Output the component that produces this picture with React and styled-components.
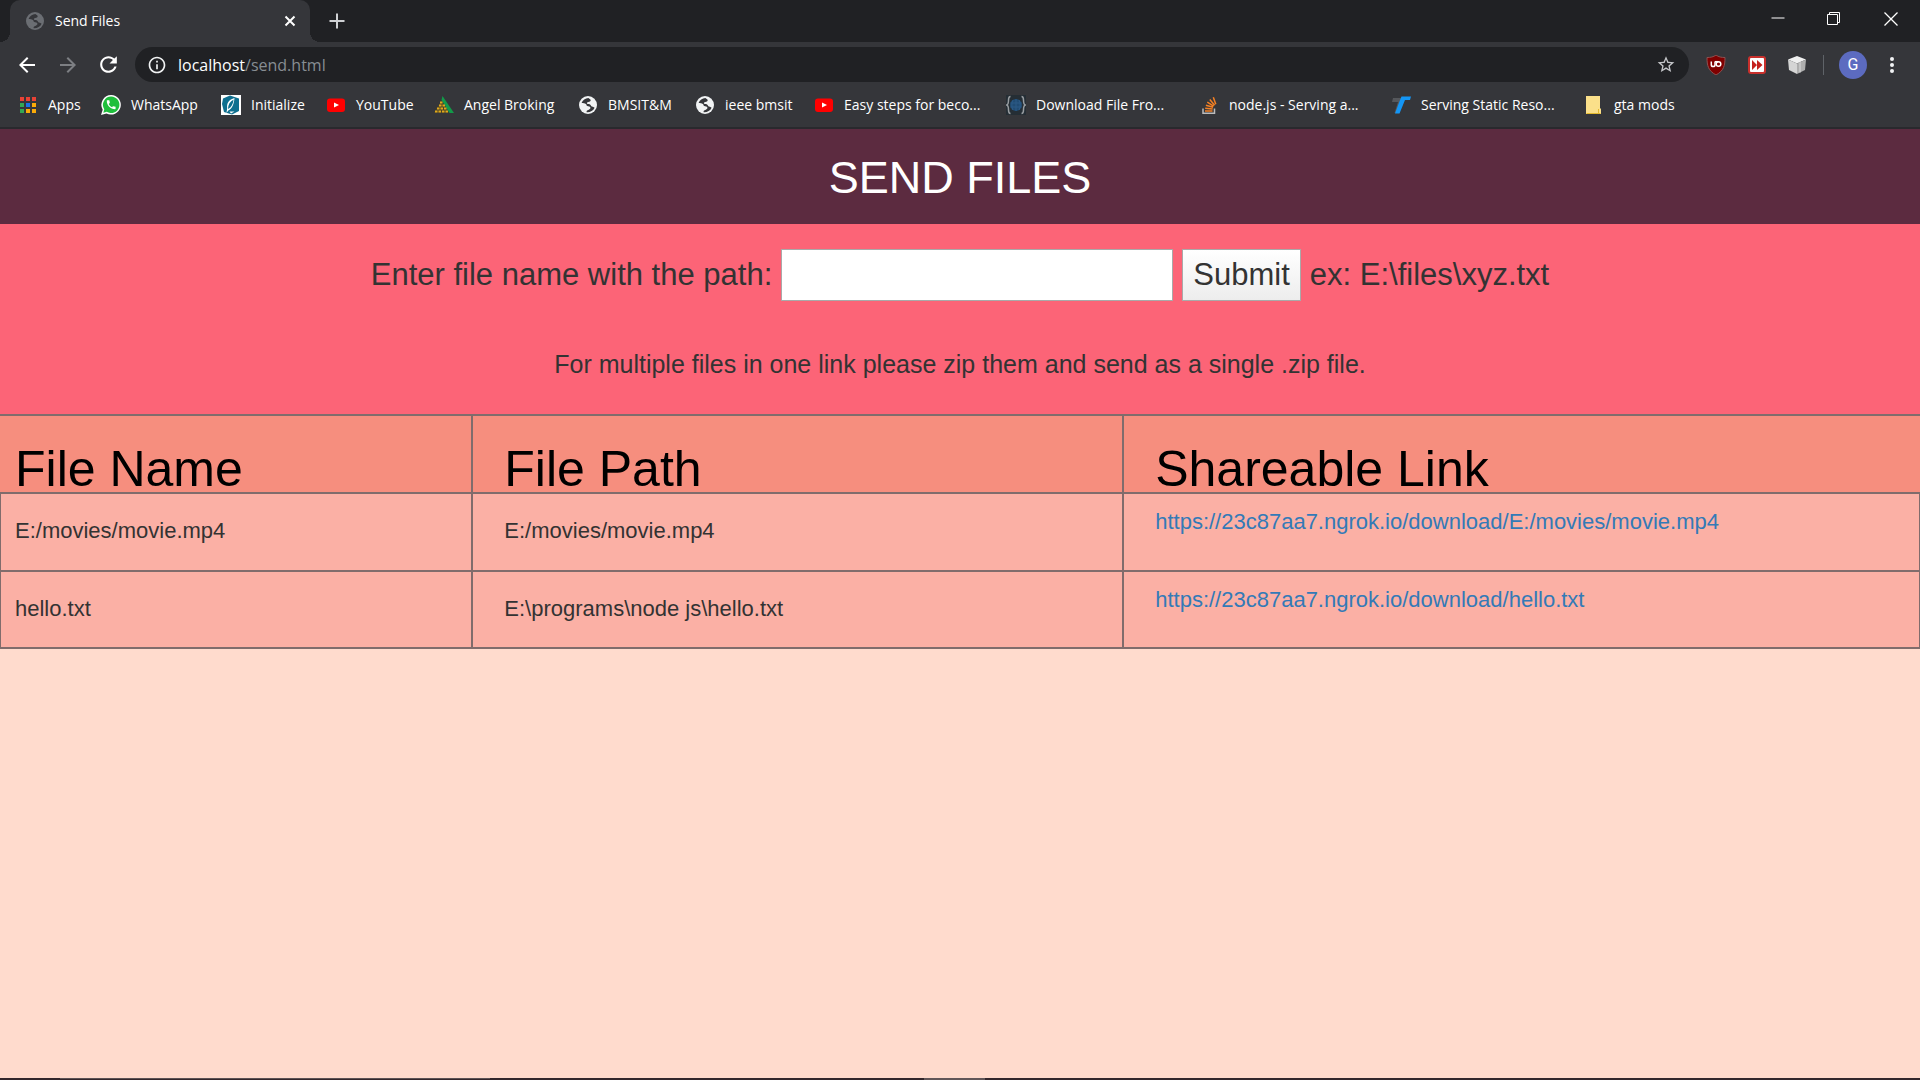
import React from "react";
import styled, { createGlobalStyle } from "styled-components";

const GlobalStyle = createGlobalStyle`
  *, *::before, *::after { box-sizing: border-box; }
  body {
    margin: 0;
    background: #ffdbcd;
    color: #333;
    font-family: Arial, "Liberation Sans", sans-serif;
  }
  button, input { font: inherit; color: inherit; margin: 0; }
`;

const Screen = styled.div`
  display: flex;
  flex-direction: column;
  min-height: 100vh;
  overflow-x: hidden;
`;

/* Browser frame */

const Chrome = styled.header`
  background: #35363a;
  color: #fff;
  font-family: "Segoe UI", "Open Sans", sans-serif;
  font-size: 14px;
  border-bottom: 2px solid #29292d;
`;

const TabStrip = styled.div`
  display: flex;
  justify-content: space-between;
  height: 42px;
  padding-left: 10px;
  background: #202124;
`;

const Tabs = styled.div`
  display: flex;
`;

const Tab = styled.div`
  position: relative;
  display: flex;
  align-items: center;
  gap: 10px;
  width: 300px;
  padding: 0 10px 0 15px;
  background: #35363a;
  border-radius: 10px 10px 0 0;

  &::before, &::after {
    content: "";
    position: absolute;
    bottom: 0;
    width: 10px;
    height: 10px;
  }
  &::before {
    left: -10px;
    background: radial-gradient(circle at 0 0, transparent 10px, #35363a 10px);
  }
  &::after {
    right: -10px;
    background: radial-gradient(circle at 100% 0, transparent 10px, #35363a 10px);
  }
`;

const TabTitle = styled.span`
  flex: 1;
  padding-bottom: 2px;
`;

const IconButton = styled.button`
  display: flex;
  align-items: center;
  justify-content: center;
  flex: none;
  width: ${(p) => p.$width}px;
  height: ${(p) => p.$height || p.$width}px;
  padding: 0;
  border: 0;
  background: none;
  color: ${(p) => p.$color || "#fff"};
`;

const WindowButtons = styled.div`
  display: flex;
`;

const Toolbar = styled.div`
  display: flex;
  align-items: center;
  height: 45px;
  padding: 0 11px 0 7px;
`;

const AddressBar = styled.div`
  display: flex;
  flex: 1;
  align-items: center;
  height: 35px;
  margin: 0 7px;
  padding: 0 13px 0 12px;
  border-radius: 18px;
  background: #202124;
`;

const Address = styled.div`
  flex: 1;
  padding-left: 11px;
  font-size: 16px;
  line-height: 24px;
`;

const AddressPath = styled.span`
  color: #9aa0a6;
  opacity: 0.85;
`;

const Divider = styled.span`
  width: 1px;
  height: 20px;
  margin: 0 7px 0 6px;
  background: #5f6368;
`;

const Avatar = styled.span`
  width: 28px;
  height: 28px;
  border-radius: 50%;
  background: #5c6bc0;
  font: 16px/28px Roboto, sans-serif;
  text-align: center;
`;

const Bookmarks = styled.nav`
  display: flex;
  align-items: center;
  height: 40px;
  padding: 0 0 4px 18px;
`;

const Bookmark = styled.a`
  display: flex;
  flex: none;
  align-items: center;
  gap: 10px;
  width: ${(p) => p.$width}px;
  color: inherit;
  text-decoration: none;
  white-space: nowrap;
`;

const BookmarkLabel = styled.span`
  padding-bottom: 2px;
`;

/* Page */

const Title = styled.h1`
  margin: 0;
  padding: 24px 0 21px;
  background: #5c2b40;
  color: #fff;
  font-size: 45px;
  font-weight: 400;
  line-height: 50px;
  text-align: center;
`;

const SendPanel = styled.section`
  display: flex;
  flex-direction: column;
  align-items: center;
  gap: 45px;
  padding: 25px 0 32px;
  background: #fc6477;
`;

const SendForm = styled.form`
  display: flex;
  align-items: center;
  justify-content: center;
  flex-wrap: wrap;
  gap: 9px;
  font-size: 31px;
  line-height: 50px;
`;

const PathInput = styled.input`
  width: 392px;
  height: 52px;
  padding: 0 8px;
  border: 1px solid #a9a9a9;
  border-radius: 0;
  background: #fff;
`;

const SubmitButton = styled.button`
  height: 52px;
  padding: 0 10px;
  border: 1px solid #a9a9a9;
  border-radius: 0;
  background: linear-gradient(#fff, #ededed);
`;

const Note = styled.p`
  margin: 0;
  font-size: 25px;
  line-height: 36px;
`;

/* One pixel wider on each side, so that only half of the outer border shows */
const FileTable = styled.table`
  width: calc(100% + 2px);
  height: 235px;
  margin: 0 -1px;
  border-collapse: collapse;
  table-layout: fixed;
`;

const Column = styled.col`
  width: ${(p) => p.$width};
`;

const HeadCell = styled.th`
  padding: 30px 0 0 ${(p) => (p.$first ? 15 : 31)}px;
  border: 2px solid #806c6c;
  background: #f68e7e;
  color: #000;
  font-size: 50px;
  font-weight: 400;
  line-height: 46px;
  text-align: left;
  vertical-align: top;

  &:first-child { border-left: 0; }
  &:last-child { border-right: 0; }
`;

const Cell = styled.td`
  padding: ${(p) => (p.$link ? "11px 0 31px" : "20px 0 22px")};
  padding-left: ${(p) => (p.$first ? 14 : 31)}px;
  border: 2px solid #806c6c;
  background: #fbb0a5;
  font-size: 22px;
  line-height: 33px;
  vertical-align: top;
`;

const FileLink = styled.a`
  color: #337ab7;
  text-decoration: none;
`;

const Blank = styled.div`
  flex: 1;
`;

const TaskbarEdge = styled.footer`
  display: flex;
  height: 2px;
  padding-left: 60px;
  background: #33272c;
`;

const TaskbarSearch = styled.div`
  width: 430px;
  margin-right: 434px;
  border-top: 1px solid #5c5254;
`;

const TaskbarApp = styled.div`
  width: 61px;
  background: #615658;
`;

/* Icons */

const Glyph = ({ size, d }) => (
  <svg width={size} height={size} viewBox="0 0 24 24" fill="currentColor" aria-hidden="true">
    <path d={d} />
  </svg>
);

const BACK = "M20 11H7.83l5.59-5.59L12 4l-8 8 8 8 1.41-1.41L7.83 13H20v-2z";
const FORWARD = "M12 4l-1.41 1.41L16.17 11H4v2h12.17l-5.58 5.59L12 20l8-8z";
const RELOAD =
  "M17.65 6.35C16.2 4.9 14.21 4 12 4c-4.42 0-7.99 3.58-7.99 8s3.57 8 7.99 8c3.73 0 6.84-2.55 7.73-6h-2.08c-.82 2.33-3.04 4-5.65 4-3.31 0-6-2.69-6-6s2.69-6 6-6c1.66 0 3.14.69 4.22 1.78L13 11h7V4l-2.35 2.35z";
const INFO =
  "M11 7h2v2h-2zm0 4h2v6h-2zm1-9C6.48 2 2 6.48 2 12s4.48 10 10 10 10-4.48 10-10S17.52 2 12 2zm0 18c-4.41 0-8-3.59-8-8s3.59-8 8-8 8 3.59 8 8-3.59 8-8 8z";
const STAR =
  "M22 9.24l-7.19-.62L12 2 9.19 8.63 2 9.24l5.46 4.73L5.82 21 12 17.27 18.18 21l-1.63-7.03L22 9.24zM12 15.4l-3.76 2.27 1-4.28-3.32-2.88 4.38-.38L12 6.1l1.71 4.04 4.38.38-3.32 2.88 1 4.28L12 15.4z";
const PHONE =
  "M20.01 15.38c-1.23 0-2.42-.2-3.53-.56-.35-.12-.74-.03-1.01.24l-1.57 1.97c-2.83-1.35-5.48-3.9-6.89-6.83l1.95-1.66c.27-.28.35-.67.24-1.02-.37-1.11-.56-2.3-.56-3.53 0-.54-.45-.99-.99-.99H4.19C3.65 3 3 3.24 3 3.99 3 13.28 10.73 21 20.01 21c.71 0 .99-.63.99-1.18v-3.45c0-.54-.45-.99-.99-.99z";

const Icon20 = ({ children }) => (
  <svg width="20" height="20" viewBox="0 0 20 20" fill="none" aria-hidden="true">
    {children}
  </svg>
);

const GlobeIcon = ({ disc = "#f1f3f4" }) => (
  <Icon20>
    <circle cx="10" cy="10" r="9" fill={disc} />
    <path
      d="M10.4 2.9C7.4 3.1 4.6 5.2 3.6 7.9c1.8.2 3.2.3 4.3 1 .9.7.5 1.7 1.4 2.2 1 .5 2.7.2 3.1 1.4.3 1-.7 1.7-1.6 2.3-.7.5-1.6.6-2.1 1.3-.2.3-.2.8 0 1.1 3.3.3 6.5-1.5 7.9-4.5-.8-.7-1.5-1-2.6-1.3-1.2-.3-1-1.5-2-2-1.2-.6-2.4 0-3-.8-.5-.8.4-1.3 1.3-1.6 1.3-.4 2.3-.5 2.4-1.7.1-1.1-.9-1.3-2.3-2.4z"
      fill="#35363a"
    />
    <path d="M3.2 11.5h3c1 0 1 1 1.8 1.3v3.5c-2.4-.7-4.2-2.4-4.8-4.8z" fill={disc} />
  </Icon20>
);

const AppsIcon = () => {
  const colours = [
    "#e94235", "#e94235", "#e94235",
    "#34a853", "#1a73e8", "#fbab08",
    "#34a853", "#fbab08", "#fbab08",
  ];
  return (
    <Icon20>
      {colours.map((fill, i) => (
        <rect key={i} x={2 + (i % 3) * 6} y={2 + Math.floor(i / 3) * 6} width="4" height="4" fill={fill} />
      ))}
    </Icon20>
  );
};

const WhatsAppIcon = () => (
  <Icon20>
    <path d="M10.2 0A9.8 9.8 0 0 0 1.7 14.7L0 20l5.5-1.5A9.8 9.8 0 1 0 10.2 0z" fill="#fff" />
    <path d="M10.2 1.6a8.2 8.2 0 0 0-6.9 12.7L2.3 17.7l3.5-1A8.2 8.2 0 1 0 10.2 1.6z" fill="#1fbf3c" />
    <path d={PHONE} transform="translate(4.3 3.9) scale(.49)" fill="#fff" />
  </Icon20>
);

const InitializeIcon = () => (
  <Icon20>
    <rect width="20" height="20" fill="#fff" />
    <path d="M2 3.5 9 .5l9 3V16L11 19.5 3 17 1 9z" fill="#0e6f8f" />
    <path d="M13.5 3C8 4.5 5.5 8 6.2 13L5.5 18l1.8-2.5C11 14 13 9 13.5 3z" fill="#fff" />
    <path d="M12.6 4.5C9 6.5 7 9.5 7 14 10.5 12.3 12 9 12.6 4.5z" fill="#0e6f8f" />
    <path d="M8.5 16.5h5l-3.5 2z" fill="#fff" />
  </Icon20>
);

const YouTubeIcon = () => (
  <Icon20>
    <rect x="1" y="3.5" width="18" height="13.5" rx="3" fill="#f00" />
    <path d="M8 7.5v5l5-2.5z" fill="#fff" />
  </Icon20>
);

const AngelIcon = () => (
  <Icon20>
    <path d="M8.5 1 20 18h-4.5L7.5 5z" fill="#129a49" />
    <path d="M7.5 5.5 14.5 18H0z" fill="#4a4326" />
    {[[6, 6.5, 1], [5, 9.5, 2], [3, 12.5, 3], [1, 15.5, 4]].map(([x, y, n]) =>
      Array.from({ length: n }, (_, i) => (
        <rect key={`${y}-${i}`} x={x + i * 3.5} y={y} width="2.5" height="2" fill="#e0a81c" />
      ))
    )}
  </Icon20>
);

const BracesIcon = () => (
  <Icon20>
    <rect width="20" height="20" fill="#252e35" />
    <circle cx="10" cy="10" r="6" fill="#214c74" />
    <path d="M4.5 8h11M4.5 12h11M10 4v12M7 5c-1.5 3-1.5 7 0 10M13 5c1.5 3 1.5 7 0 10" stroke="#2c5a86" />
    <path
      d="M4.5 1.5C2.5 1.5 2.5 3 2.5 5s0 4.5-1.8 5c1.8.5 1.8 3 1.8 5s0 3.5 2 3.5M15.5 1.5c2 0 2 1.5 2 3.5s0 4.5 1.8 5c-1.8.5-1.8 3-1.8 5s0 3.5-2 3.5"
      stroke="#989da1"
      strokeWidth="1.5"
    />
  </Icon20>
);

const StackIcon = () => (
  <Icon20>
    <path d="M4 13.5v4.8h11.5v-4.8" stroke="#bcbbbb" strokeWidth="1.5" />
    <path
      d="M6 16h7.5M6.2 13.3l7.5.8M6.9 10.3l7.2 2M8.3 7.2l6.3 4M10.8 4.6l4.8 5.7M14.3 2.3l2.5 7"
      stroke="#f48024"
      strokeWidth="1.5"
    />
  </Icon20>
);

const LetterMarkIcon = () => (
  <Icon20>
    <path d="M2 3h8l-4 15H3.5L7 7H1z" fill="#55575b" />
    <path d="M10.5 1.5H20l-1 3.5h-5L8.5 18.5H4L9 5z" fill="#1496f5" />
  </Icon20>
);

const FolderPageIcon = () => (
  <Icon20>
    <path d="M2 1h14v12l1 1v5H2z" fill="#fbe08a" />
    <path d="M2.5 18.5h14M14.5 14v4" stroke="#e3b92f" />
  </Icon20>
);

const ShieldIcon = () => (
  <Icon20>
    <path d="M10 0c2.5 2 5.5 2.5 9 2.5 0 8-1 13-9 17.5C2 15.5 1 10.5 1 2.5 4.5 2.5 7.5 2 10 0z" fill="#800000" stroke="#8d5050" />
    <path d="M5.3 6.5v3.2a1.8 1.8 0 0 0 3.7 0V6.5" stroke="#fff" strokeWidth="1.5" />
    <circle cx="12.5" cy="9" r="2.3" stroke="#fff" strokeWidth="1.5" />
    <path d="M9 6.7h3.5" stroke="#fff" strokeWidth="1.5" />
  </Icon20>
);

const SkipIcon = () => (
  <Icon20>
    <rect x="1" y="1" width="18" height="18" rx="3" fill="#c9302c" />
    <rect x="3" y="3" width="14" height="14" rx="1" fill="#fff" />
    <path d="M5 5l5 5-5 5zM10 5l5.5 5-5.5 5z" fill="#c4211d" />
  </Icon20>
);

const CubeIcon = () => (
  <Icon20>
    <path d="M10 1l9 3.5-9 4-9-4z" fill="#f0f0f0" />
    <path d="M1 4.5l9 4V19l-8-4z" fill="#d5d5d5" />
    <path d="M19 4.5l-9 4V19l8-4z" fill="#aeaeae" />
    <path d="M13 7.2v10.4" stroke="#dcdcdc" />
  </Icon20>
);

const MinimizeIcon = () => (
  <Icon20><path d="M3.5 9h13" stroke="#fff" /></Icon20>
);
const RestoreIcon = () => (
  <Icon20><path d="M3.5 5.5h10v10h-10zM5.5 5.5v-2h10v10h-2" stroke="#fff" /></Icon20>
);
const CloseWindowIcon = () => (
  <Icon20><path d="M3.5 3.5l13 13M16.5 3.5l-13 13" stroke="#fff" strokeWidth="1.3" /></Icon20>
);
const CloseTabIcon = () => (
  <Icon20><path d="M5.5 5.5l9 9M14.5 5.5l-9 9" stroke="#fff" strokeWidth="2" /></Icon20>
);
const PlusIcon = () => (
  <Icon20><path d="M10 2.5v15M2.5 10h15" stroke="#cfd1d4" strokeWidth="2" /></Icon20>
);
const MenuIcon = () => (
  <Icon20>
    {[4, 10, 16].map((y) => (
      <circle key={y} cx="10" cy={y} r="2" fill="#f1f3f4" />
    ))}
  </Icon20>
);

/* Data */

const BOOKMARKS = [
  { label: "Apps", icon: AppsIcon, width: 83 },
  { label: "WhatsApp", icon: WhatsAppIcon, width: 120 },
  { label: "Initialize", icon: InitializeIcon, width: 105 },
  { label: "YouTube", icon: YouTubeIcon, width: 108 },
  { label: "Angel Broking", icon: AngelIcon, width: 144 },
  { label: "BMSIT&M", icon: GlobeIcon, width: 117 },
  { label: "ieee bmsit", icon: GlobeIcon, width: 119 },
  { label: "Easy steps for beco...", icon: YouTubeIcon, width: 192 },
  { label: "Download File Fro...", icon: BracesIcon, width: 193 },
  { label: "node.js - Serving a...", icon: StackIcon, width: 192 },
  { label: "Serving Static Reso...", icon: LetterMarkIcon, width: 193 },
  { label: "gta mods", icon: FolderPageIcon, width: 120 },
];

const FILES = [
  {
    name: "E:/movies/movie.mp4",
    path: "E:/movies/movie.mp4",
    link: "https://23c87aa7.ngrok.io/download/E:/movies/movie.mp4",
  },
  {
    name: "hello.txt",
    path: "E:\\programs\\node js\\hello.txt",
    link: "https://23c87aa7.ngrok.io/download/hello.txt",
  },
];

const BrowserFrame = () => (
  <Chrome>
    <TabStrip>
      <Tabs>
        <Tab>
          <GlobeIcon disc="#6b6e73" />
          <TabTitle>Send Files</TabTitle>
          <IconButton $width={20} aria-label="Close tab"><CloseTabIcon /></IconButton>
        </Tab>
        <IconButton $width={54} $height={42} aria-label="New tab"><PlusIcon /></IconButton>
      </Tabs>
      <WindowButtons>
        <IconButton $width={56} $height={37} aria-label="Minimize"><MinimizeIcon /></IconButton>
        <IconButton $width={56} $height={37} aria-label="Restore"><RestoreIcon /></IconButton>
        <IconButton $width={58} $height={37} aria-label="Close window"><CloseWindowIcon /></IconButton>
      </WindowButtons>
    </TabStrip>
    <Toolbar>
      <IconButton $width={40} aria-label="Back"><Glyph size={24} d={BACK} /></IconButton>
      <IconButton $width={41} $color="#7d7f83" aria-label="Forward"><Glyph size={24} d={FORWARD} /></IconButton>
      <IconButton $width={40} aria-label="Reload"><Glyph size={25} d={RELOAD} /></IconButton>
      <AddressBar>
        <IconButton $width={20} $color="#f1f3f4" aria-label="Site information"><Glyph size={20} d={INFO} /></IconButton>
        <Address>localhost<AddressPath>/send.html</AddressPath></Address>
        <IconButton $width={20} $color="#c4c6c9" aria-label="Bookmark this page"><Glyph size={21} d={STAR} /></IconButton>
      </AddressBar>
      <IconButton $width={40} aria-label="Content blocker"><ShieldIcon /></IconButton>
      <IconButton $width={41} aria-label="Video speed"><SkipIcon /></IconButton>
      <IconButton $width={40} aria-label="Package"><CubeIcon /></IconButton>
      <Divider />
      <IconButton $width={44} aria-label="Profile"><Avatar>G</Avatar></IconButton>
      <IconButton $width={34} aria-label="Menu"><MenuIcon /></IconButton>
    </Toolbar>
    <Bookmarks>
      {BOOKMARKS.map(({ label, icon: BookmarkIcon, width }) => (
        <Bookmark key={label} href="#" $width={width}>
          <BookmarkIcon />
          <BookmarkLabel>{label}</BookmarkLabel>
        </Bookmark>
      ))}
    </Bookmarks>
  </Chrome>
);

export default function App() {
  return (
    <Screen>
      <GlobalStyle />
      <BrowserFrame />
      <main>
        <Title>SEND FILES</Title>
        <SendPanel>
          <SendForm onSubmit={(e) => e.preventDefault()}>
            <label htmlFor="file-path">Enter file name with the path:</label>
            <PathInput id="file-path" type="text" />
            <SubmitButton type="submit">Submit</SubmitButton>
            <span>ex: E:\files\xyz.txt</span>
          </SendForm>
          <Note>For multiple files in one link please zip them and send as a single .zip file.</Note>
        </SendPanel>
        <FileTable>
          <colgroup>
            <Column $width="24.6%" />
            <Column $width="33.9%" />
            <Column $width="41.5%" />
          </colgroup>
          <thead>
            <tr>
              <HeadCell scope="col" $first>File Name</HeadCell>
              <HeadCell scope="col">File Path</HeadCell>
              <HeadCell scope="col">Shareable Link</HeadCell>
            </tr>
          </thead>
          <tbody>
            {FILES.map((file) => (
              <tr key={file.link}>
                <Cell $first>{file.name}</Cell>
                <Cell>{file.path}</Cell>
                <Cell $link><FileLink href={file.link}>{file.link}</FileLink></Cell>
              </tr>
            ))}
          </tbody>
        </FileTable>
      </main>
      <Blank />
      <TaskbarEdge>
        <TaskbarSearch />
        <TaskbarApp />
      </TaskbarEdge>
    </Screen>
  );
}
